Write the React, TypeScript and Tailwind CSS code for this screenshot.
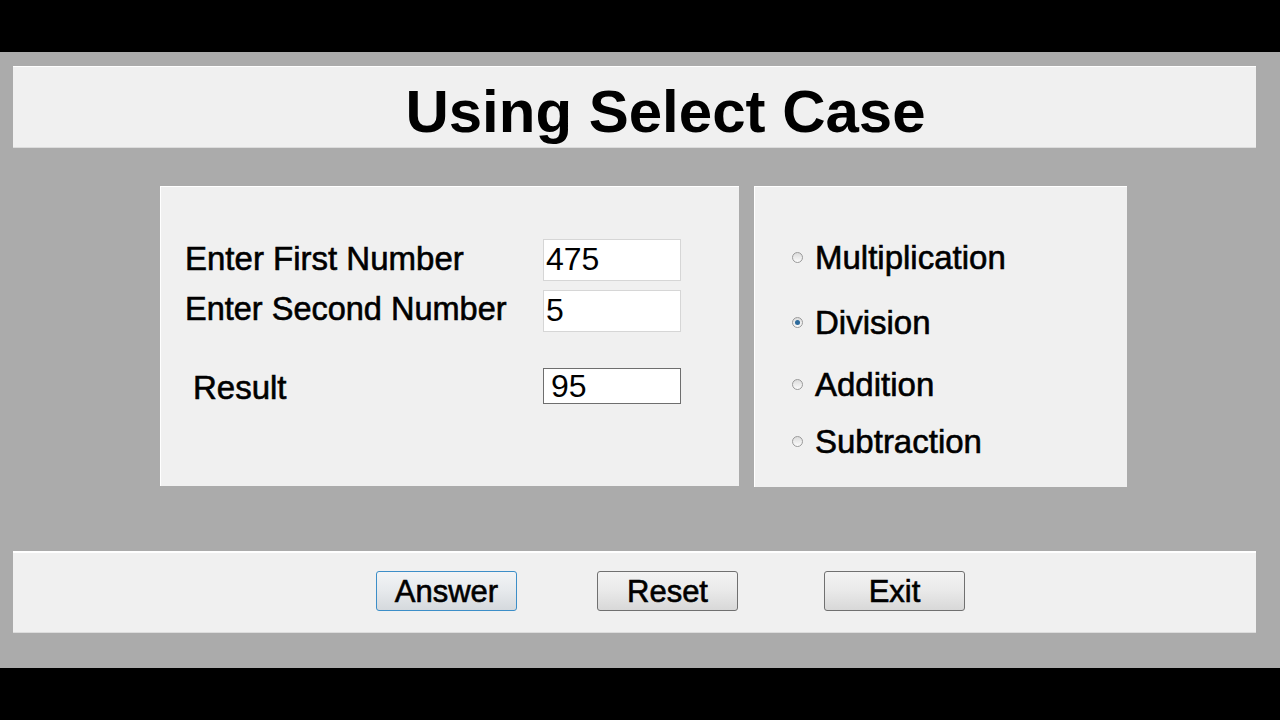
import { useState } from 'react';

const font = "font-['Liberation_Sans',Arial,sans-serif]";
const ink = '[-webkit-text-stroke:0.6px_#000]';

function Radio({ label, checked, className }: { label: string; checked?: boolean; className?: string }) {
  return (
    <div className={`flex items-center ${className ?? ''}`}>
      <span className="w-[11px] h-[11px] rounded-full border border-[#9a9a9a] bg-gradient-to-b from-[#dcdcdc] to-[#fbfbfb] flex items-center justify-center">
        {checked && <span className="w-[5px] h-[5px] rounded-full bg-[#2c6a9c]" />}
      </span>
      <span className={`ml-[12px] text-[33px] leading-none text-black ${ink}`}>{label}</span>
    </div>
  );
}

function WinButton({ label, focused }: { label: string; focused?: boolean }) {
  return (
    <button
      className={`w-[141px] h-[40px] rounded-[3px] border text-[31px] leading-none text-black ${ink} ${
        focused
          ? 'border-[#3c8ec8] bg-gradient-to-b from-[#f2f4f6] via-[#e6e9ec] to-[#d5d9dd]'
          : 'border-[#707070] bg-gradient-to-b from-[#f3f3f3] via-[#e9e9e9] to-[#d8d8d8]'
      }`}
    >
      {label}
    </button>
  );
}

export default function App() {
  const [first] = useState('475');
  const [second] = useState('5');
  const [result] = useState('95');

  return (
    <div className={`h-screen w-full bg-black flex flex-col ${font}`}>
      <div className="h-[52px]" />
      <div className="flex-1 bg-[#ababab] pl-[13px] pr-[24px] flex flex-col">
        <div className="mt-[14px] h-[82px] bg-[#f0f0f0] border-t border-white border-b border-b-[#dcdcdc] flex items-center justify-center">
          <h1 className="text-[60px] font-bold leading-none text-black pl-[62px] pt-[10px]">Using Select Case</h1>
        </div>

        <div className="mt-[38px] flex ml-[147px] gap-[15px]">
          <div className="w-[579px] h-[300px] bg-[#f0f0f0] border-t border-l border-white pl-[24px] pt-[52px]">
            <div className="flex items-center">
              <span className={`w-[358px] pb-[4px] text-[33px] leading-none text-black ${ink}`}>Enter First Number</span>
              <div className="w-[138px] h-[42px] bg-white border border-[#d6d6d6] flex items-center pl-[2px] pb-[2px] text-[32px] text-black">
                {first}
              </div>
            </div>
            <div className="flex items-center mt-[9px]">
              <span className={`w-[358px] pb-[4px] text-[32.5px] leading-none text-black ${ink}`}>Enter Second Number</span>
              <div className="w-[138px] h-[42px] bg-white border border-[#d6d6d6] flex items-center pl-[2px] pb-[2px] text-[32px] text-black">
                {second}
              </div>
            </div>
            <div className="flex items-center mt-[36px]">
              <span className={`w-[358px] pl-[8px] pt-[2px] text-[33px] leading-none text-black ${ink}`}>Result</span>
              <div className="w-[138px] h-[36px] bg-white border border-[#6e6e6e] flex items-center pl-[7px] text-[32px] text-black">
                {result}
              </div>
            </div>
          </div>

          <div className="w-[373px] h-[301px] bg-[#f0f0f0] border-t border-l border-white pl-[37px] pt-[54px]">
            <Radio label="Multiplication" />
            <Radio label="Division" checked className="mt-[32px]" />
            <Radio label="Addition" className="mt-[29px]" />
            <Radio label="Subtraction" className="mt-[24px]" />
          </div>
        </div>

        <div className="mt-[64px] h-[82px] bg-[#f0f0f0] border-t-2 border-white border-b border-b-[#dcdcdc] flex items-center pl-[363px] pb-[3px]">
          <WinButton label="Answer" focused />
          <div className="ml-[80px]">
            <WinButton label="Reset" />
          </div>
          <div className="ml-[86px]">
            <WinButton label="Exit" />
          </div>
        </div>
      </div>
      <div className="h-[52px]" />
    </div>
  );
}
